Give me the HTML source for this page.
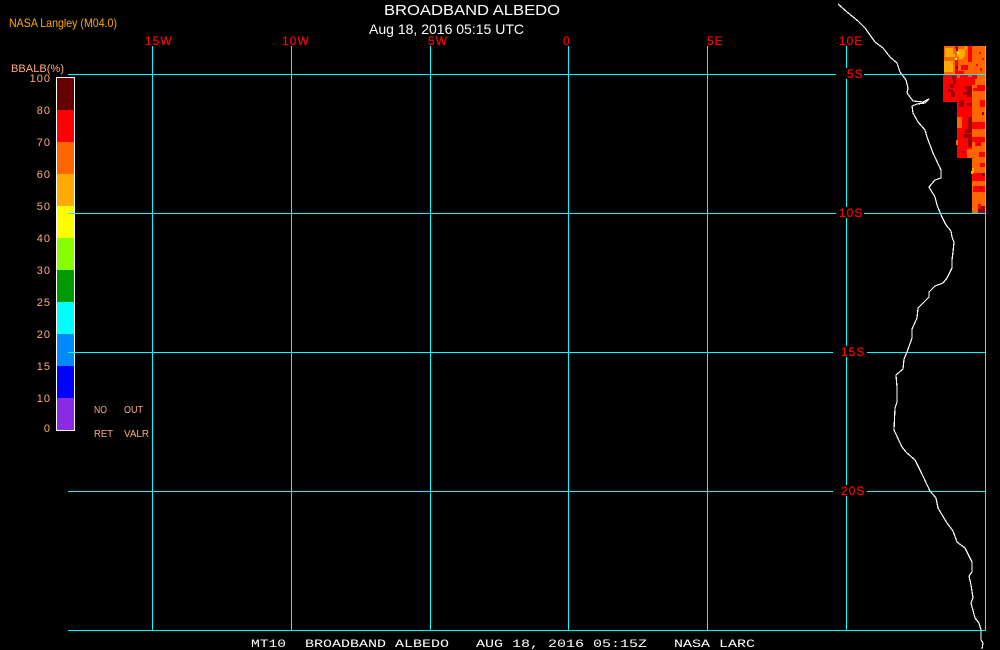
<!DOCTYPE html>
<html lang="en">
<head>
<meta charset="utf-8">
<title>Broadband Albedo</title>
<style>
html,body{margin:0;padding:0;background:#000;width:1000px;height:650px;overflow:hidden}
svg{display:block;position:absolute;left:0;top:0}
.m{font-family:"Liberation Mono",monospace;font-size:11px}
.s{font-family:"Liberation Sans",sans-serif}
.a{font-family:"Liberation Sans",sans-serif;font-size:12px;fill:#ff0000;stroke:#ff0000;stroke-width:.2px}
.l{font-family:"Liberation Sans",sans-serif;font-size:11px;letter-spacing:1px;fill:#ffaa80}
.n{font-family:"Liberation Sans",sans-serif;font-size:10px;fill:#ffaa80}
.w{fill:#fff}
</style>
</head>
<body>
<svg width="1000" height="650" viewBox="0 0 1000 650" xmlns="http://www.w3.org/2000/svg">
<rect width="1000" height="650" fill="#000"/>

<!-- heat map -->
<g shape-rendering="crispEdges">
<rect x="944" y="46" width="41" height="28" fill="#ff6600"/>
<rect x="943" y="74" width="14" height="28" fill="#ff0000"/>
<rect x="957" y="74" width="15" height="84" fill="#ff0000"/>
<rect x="972" y="74" width="13" height="139" fill="#ff6600"/>
<!-- yellow-orange patches -->
<path fill="#ffaa00" d="M945 48h8v9h-8zM944 61h9v11h-9zM957 49h8v8h-8zM953 54h2v3h-2zM965 46h2v3h-2zM959 57h4v2h-4z"/>
<path fill="#ffff00" d="M957 52h2v2h-2zM955 58h2v2h-2z"/>
<!-- top block reds -->
<path fill="#ff0000" d="M955 46h3v3h-3zM955 60h3v14h-3zM968 46h4v16h-4zM961 65h7v5h-7zM958 71h6v3h-6zM979 52h2v2h-2zM982 58h2v2h-2zM976 64h2v2h-2zM980 68h2v3h-2z"/>
<path fill="#990000" d="M956 47h2v4h-2zM956 66h2v3h-2z"/>
<!-- lower left dark -->
<path fill="#990000" d="M952 76h4v3h-4zM953 79h3v5h-3zM950 84h4v4h-4zM948 89h5v3h-5zM951 92h4v5h-4zM965 86h7v4h-7zM967 90h5v7h-5zM963 92h4v3h-4z"/>
<!-- middle column -->
<path fill="#ff6600" d="M957 74h3v4h-3zM968 74h4v3h-4zM957 117h5v11h-5zM956 140h2v5h-2zM967 149h5v9h-5z"/>
<path fill="#990000" d="M959 100h5v7h-5zM967 103h5v3h-5zM968 117h4v12h-4zM965 129h7v4h-7zM964 134h8v4h-8zM968 138h4v9h-4zM962 151h3v2h-3z"/>
<!-- right column reds -->
<path fill="#ff0000" d="M972 74h5v5h-5zM972 79h3v6h-3zM973 88h12v3h-12zM977 85h8v3h-8zM980 100h5v7h-5zM972 122h13v7h-13zM972 137h13v5h-13zM975 142h6v4h-6zM979 152h6v5h-6zM980 163h5v4h-5zM972 173h13v8h-13zM973 186h12v6h-12zM978 204h3v6h-3z"/>
<path fill="#990000" d="M982 112h2v3h-2zM978 143h2v2h-2zM982 173h3v3h-3zM980 187h2v2h-2zM981 206h4v7h-4zM978 209h3v4h-3z"/>
<path fill="#ffaa00" d="M972 168h2v5h-2zM971 171h2v3h-2z"/>
</g>

<!-- colour bar -->
<g shape-rendering="crispEdges">
<rect x="57" y="78" width="17" height="32" fill="#660000"/>
<rect x="57" y="110" width="17" height="32" fill="#ff0000"/>
<rect x="57" y="142" width="17" height="32" fill="#ff6600"/>
<rect x="57" y="174" width="17" height="32" fill="#ffaa00"/>
<rect x="57" y="206" width="17" height="32" fill="#ffff00"/>
<rect x="57" y="238" width="17" height="32" fill="#88ff00"/>
<rect x="57" y="270" width="17" height="32" fill="#009900"/>
<rect x="57" y="302" width="17" height="32" fill="#00ffff"/>
<rect x="57" y="334" width="17" height="32" fill="#0088ff"/>
<rect x="57" y="366" width="17" height="32" fill="#0000ff"/>
<rect x="57" y="398" width="17" height="32" fill="#8a2be2"/>
<rect x="56.5" y="77.5" width="18" height="353" fill="none" stroke="#fff" stroke-width="1"/>
</g>

<!-- grid -->
<g fill="#00ffff" shape-rendering="crispEdges">
<rect x="152" y="46" width="1" height="585"/>
<rect x="291" y="46" width="1" height="585"/>
<rect x="430" y="46" width="1" height="585"/>
<rect x="568" y="46" width="1" height="585"/>
<rect x="707" y="46" width="1" height="585"/>
<rect x="846" y="46" width="1" height="585"/>
<rect x="985" y="46" width="1" height="585"/>
<rect x="68" y="74" width="918" height="1"/>
<rect x="68" y="213" width="918" height="1"/>
<rect x="68" y="352" width="918" height="1"/>
<rect x="68" y="491" width="918" height="1"/>
<rect x="68" y="630" width="918" height="1"/>
</g>

<!-- coast -->
<polyline fill="none" stroke="#fff" stroke-width="1.2" shape-rendering="crispEdges" points="838,4 847,12 858,21 865,28 870,35 875,42 883,48 890,57 897,63 900,72 906,80 908,88 907,93 913,101 923,102 929,99 925,103 917,104 912,106 913,113 918,122 925,130 927,137 933,153 941,170 941,178 935,180 929,187 935,197 937,205 939,210 942,217 946,225 951,231 952,237 954,242 953,252 952,260 952,268 947,278 943,283 935,286 929,292 929,297 921,305 918,308 917,318 912,329 912,338 907,352 904,359 903,369 896,375 897,387 897,402 895,408 894,430 902,447 906,452 915,460 921,472 930,491 936,498 938,508 947,523 953,531 957,542 965,548 972,562 972,572 969,576 971,585 973,598 971,603 975,618 979,623 981,630 981,640 983,643 982,649"/>

<!-- label masks -->
<g fill="#000" shape-rendering="crispEdges">
<rect x="836" y="68" width="28" height="11"/>
<rect x="836" y="207" width="28" height="11"/>
<rect x="833" y="346" width="34" height="11"/>
<rect x="833" y="485" width="34" height="11"/>
</g>

<!-- titles -->
<text class="s w" x="384" y="15" font-size="15" textLength="176" lengthAdjust="spacingAndGlyphs">BROADBAND ALBEDO</text>
<text class="s w" x="369" y="34" font-size="14" textLength="155" lengthAdjust="spacingAndGlyphs">Aug 18, 2016 05:15 UTC</text>
<text class="s" x="9" y="27" font-size="12" fill="#ffaa00" textLength="108" lengthAdjust="spacingAndGlyphs">NASA Langley (M04.0)</text>

<!-- axis labels -->
<text class="a" x="145" y="45" letter-spacing="1">15W</text>
<text class="a" x="282" y="45" letter-spacing="1">10W</text>
<text class="a" x="428" y="45" letter-spacing="1">5W</text>
<text class="a" x="563" y="45">0</text>
<text class="a" x="707" y="45" letter-spacing="1">5E</text>
<text class="a" x="839" y="45" letter-spacing="1">10E</text>
<text class="a" x="847" y="78" letter-spacing="1">5S</text>
<text class="a" x="839" y="217" letter-spacing="1">10S</text>
<text class="a" x="841" y="356" letter-spacing="1">15S</text>
<text class="a" x="841" y="495" letter-spacing="1">20S</text>

<!-- colour bar labels -->
<text class="l" x="11" y="72" textLength="54" lengthAdjust="spacing">BBALB(%)</text>
<g class="l" text-anchor="end">
<text x="51" y="82">100</text>
<text x="51" y="114">80</text>
<text x="51" y="146">70</text>
<text x="51" y="178">60</text>
<text x="51" y="210">50</text>
<text x="51" y="242">40</text>
<text x="51" y="274">30</text>
<text x="51" y="306">25</text>
<text x="51" y="338">20</text>
<text x="51" y="370">15</text>
<text x="51" y="402">10</text>
<text x="51" y="432">0</text>
</g>
<text class="n" x="94" y="413" textLength="13" lengthAdjust="spacingAndGlyphs">NO</text>
<text class="n" x="124" y="413" textLength="19" lengthAdjust="spacingAndGlyphs">OUT</text>
<text class="n" x="94" y="437" textLength="19" lengthAdjust="spacingAndGlyphs">RET</text>
<text class="n" x="124" y="437" textLength="25" lengthAdjust="spacingAndGlyphs">VALR</text>

<!-- bottom line -->
<text class="m w" x="251" y="647" textLength="35" lengthAdjust="spacingAndGlyphs">MT10</text>
<text class="m w" x="305" y="647" textLength="144" lengthAdjust="spacingAndGlyphs">BROADBAND ALBEDO</text>
<text class="m w" x="476" y="647" textLength="171" lengthAdjust="spacingAndGlyphs">AUG 18, 2016 05:15Z</text>
<text class="m w" x="674" y="647" textLength="81" lengthAdjust="spacingAndGlyphs">NASA LARC</text>
</svg>
</body>
</html>
